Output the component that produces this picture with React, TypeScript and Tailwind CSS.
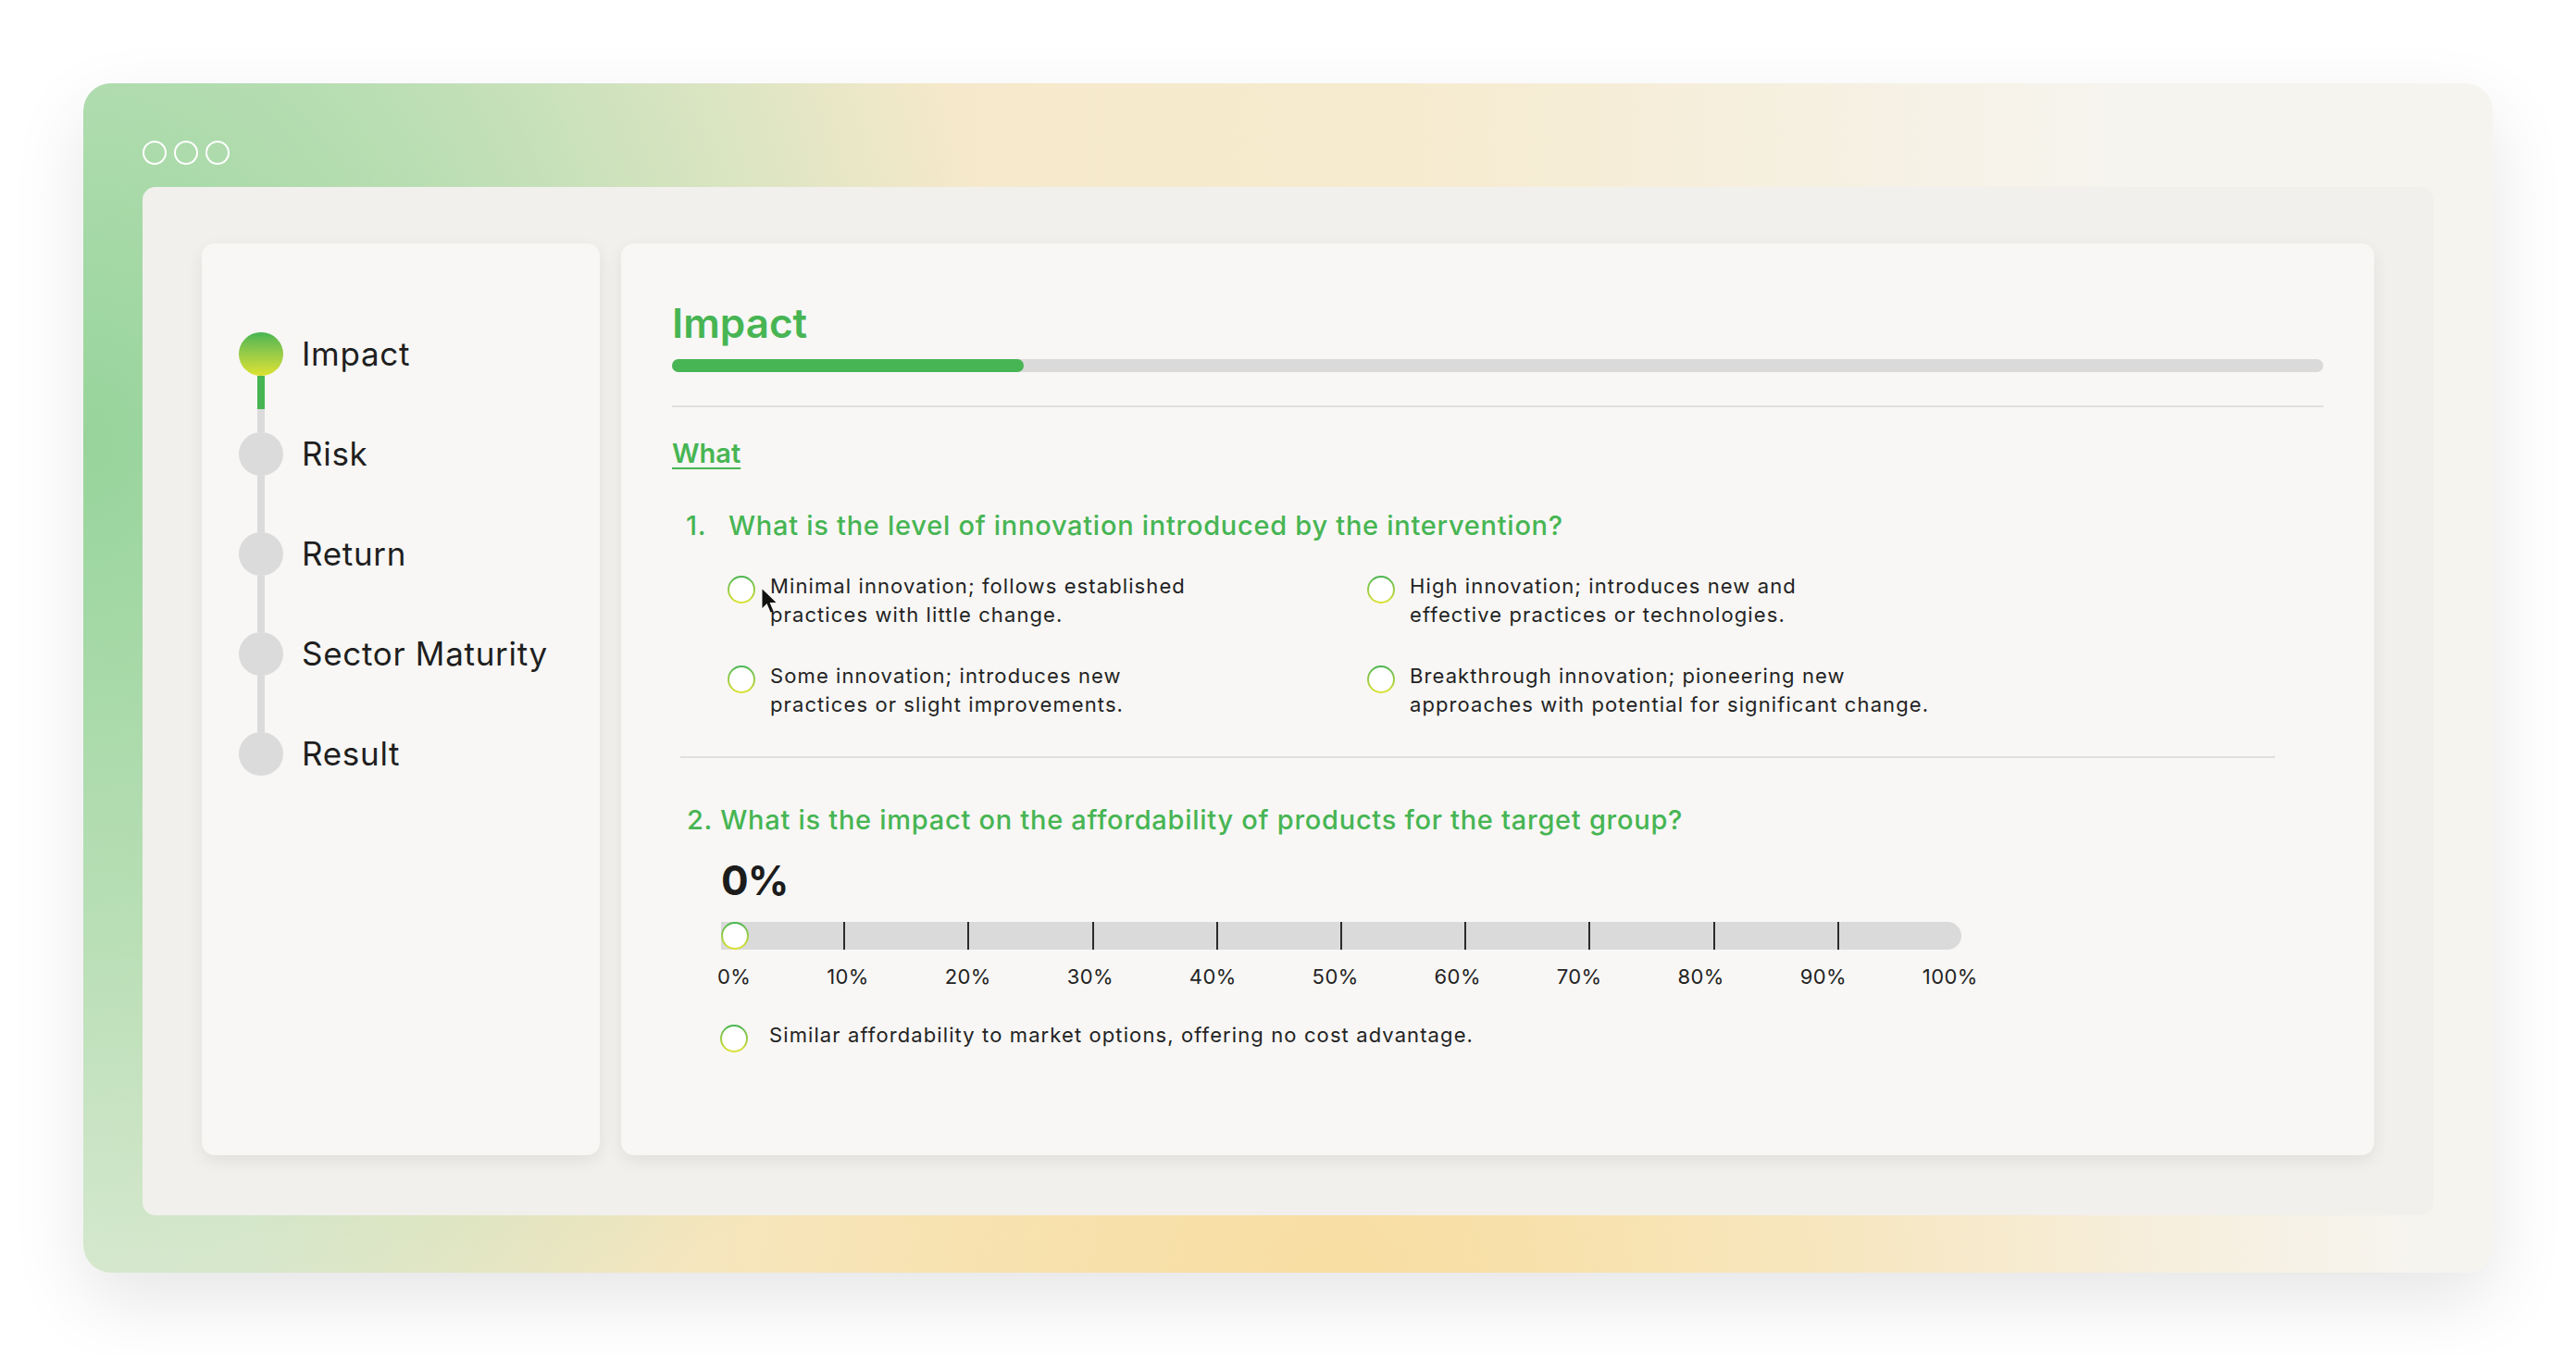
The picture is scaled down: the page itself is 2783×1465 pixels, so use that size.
import { Fragment } from 'react';

const steps = ['Impact', 'Risk', 'Return', 'Sector Maturity', 'Result'];

const ticks = ['0%', '10%', '20%', '30%', '40%', '50%', '60%', '70%', '80%', '90%', '100%'];

const innovation = [
  ['Minimal innovation; follows established', 'practices with little change.'],
  ['High innovation; introduces new and', 'effective practices or technologies.'],
  ['Some innovation; introduces new', 'practices or slight improvements.'],
  ['Breakthrough innovation; pioneering new', 'approaches with potential for significant change.'],
];

function Radio() {
  return (
    <span className="block w-[30px] h-[30px] shrink-0 rounded-full bg-linear-to-b from-[#45b553] to-[#dde22c] p-[2px]">
      <span className="block w-full h-full rounded-full bg-white" />
    </span>
  );
}

function Cursor() {
  return (
    <svg className="absolute left-[37px] top-[18px]" width="19" height="27" viewBox="0 0 19 27">
      <path d="M0.5 0.5 L0.5 21 L5.5 16 L9.5 25.5 L12.5 24.2 L8.6 15 L15.5 15 Z" fill="#111" />
    </svg>
  );
}

function Option({ lines, cursor, gap = 'gap-[16px]' }: { lines: string[]; cursor?: boolean; gap?: string }) {
  return (
    <div className={`relative flex items-start ${gap}`}>
      <span className="mt-[4px]">
        <Radio />
      </span>
      <p className="text-[22px] leading-[31px] tracking-[0.05em] text-[#232323]">
        {lines.map((l, i) => (
          <Fragment key={i}>
            {l}
            {i < lines.length - 1 && <br />}
          </Fragment>
        ))}
      </p>
      {cursor && <Cursor />}
    </div>
  );
}

function Sidebar() {
  return (
    <aside className="w-[430px] shrink-0 rounded-[14px] bg-[#f8f7f5] shadow-[0_6px_18px_rgba(0,0,0,0.07)] pt-[96px] pl-[40px]">
      {steps.map((s, i) => {
        const active = i === 0;
        return (
          <div key={s}>
            <div className="flex items-center">
              <span
                className={
                  active
                    ? 'block w-[48px] h-[47px] rounded-full bg-linear-to-b from-[#45b553] to-[#dce22d]'
                    : 'block w-[48px] h-[47px] rounded-full bg-[#dbdbdb]'
                }
              />
              <span className="ml-[20px] text-[35px] leading-[47px] tracking-[0.02em] text-[#1f1f1f]">{s}</span>
            </div>
            {i < steps.length - 1 && (
              <div className="ml-[20px] w-[8px] h-[61px] bg-[#dbdbdb] flex flex-col">
                {active && <div className="h-[36px] bg-[#47b553]" />}
              </div>
            )}
          </div>
        );
      })}
    </aside>
  );
}

function Slider() {
  return (
    <div className="ml-[49px] w-[1362px]">
      <div className="relative ml-[4px] w-[1340px] h-[30px] flex rounded-r-full bg-[#dadada]">
        {ticks.slice(1).map((t, i) => (
          <div key={t} className={i < 9 ? 'flex-1 border-r-2 border-[#2b2b2b]' : 'flex-1'} />
        ))}
        <span className="absolute left-0 top-0">
          <Radio />
        </span>
      </div>
      <div className="mt-[18px] flex justify-between text-[22px] leading-[22px] tracking-[0.02em] text-[#232323]">
        {ticks.map((t) => (
          <span key={t}>{t}</span>
        ))}
      </div>
    </div>
  );
}

function Content() {
  return (
    <section className="flex-1 rounded-[14px] bg-[#f8f7f5] shadow-[0_6px_18px_rgba(0,0,0,0.07)] pt-[64px] px-[55px]">
      <h1 className="text-[44px] leading-[44px] font-semibold text-[#47b553]">Impact</h1>
      <div className="mt-[17px] h-[14px] rounded-full bg-[#dadada]">
        <div className="h-full w-[380px] rounded-full bg-[#47b553]" />
      </div>
      <div className="mt-[36px] h-[2px] bg-[#e0dfdc]" />

      <h2 className="mt-[35px] text-[29px] leading-[29px] font-semibold text-[#47b553] underline decoration-2 underline-offset-[5px]">
        What
      </h2>

      <h3 className="mt-[49px] ml-[15px] flex text-[29px] leading-[29px] font-medium tracking-[0.025em] text-[#47b553]">
        <span className="w-[46px]">1.</span>
        <span>What is the level of innovation introduced by the intervention?</span>
      </h3>

      <div className="mt-[36px] ml-[60px] grid grid-cols-[691px_1fr] gap-y-[35px]">
        {innovation.map((o, i) => (
          <Option key={i} lines={o} cursor={i === 0} />
        ))}
      </div>

      <div className="mt-[40px] ml-[9px] mr-[52px] h-[2px] bg-[#e0dfdc]" />

      <h3 className="mt-[52px] ml-[16px] text-[29px] leading-[29px] font-medium tracking-[0.025em] text-[#47b553]">
        2. What is the impact on the affordability of products for the target group?
      </h3>

      <div className="mt-[29px] ml-[53px] text-[44px] leading-[44px] font-bold tracking-[-0.02em] text-[#1c1c1c]">0%</div>

      <div className="mt-[23px]">
        <Slider />
      </div>

      <div className="mt-[37px] ml-[52px]">
        <Option gap="gap-[23px]" lines={['Similar affordability to market options, offering no cost advantage.']} />
      </div>
    </section>
  );
}

export default function App() {
  return (
    <div className="h-screen w-full bg-white p-[90px] font-['Inter','Liberation_Sans',sans-serif]">
      <div className="h-full flex flex-col rounded-[30px] px-[64px] pt-[62px] pb-[62px] shadow-[0_30px_80px_rgba(0,0,0,0.10)] bg-[radial-gradient(ellipse_38%_95%_at_0%_30%,#97d49b_0%,rgba(151,212,155,0.6)_45%,rgba(151,212,155,0)_100%),radial-gradient(ellipse_45%_65%_at_52%_100%,#f8dea2_0%,rgba(248,222,162,0)_100%),linear-gradient(90deg,#eef0e2_0%,#f6e9cb_35%,#f6ebcf_55%,#f6f4ef_85%)]">
        <div className="flex gap-[8px] h-[26px] mb-[24px]">
          <span className="w-[26px] h-[26px] rounded-full border-2 border-white" />
          <span className="w-[26px] h-[26px] rounded-full border-2 border-white" />
          <span className="w-[26px] h-[26px] rounded-full border-2 border-white" />
        </div>
        <div className="flex-1 flex gap-[23px] rounded-[14px] bg-[#f1f0ec] pt-[61px] pb-[65px] px-[64px]">
          <Sidebar />
          <Content />
        </div>
      </div>
    </div>
  );
}
